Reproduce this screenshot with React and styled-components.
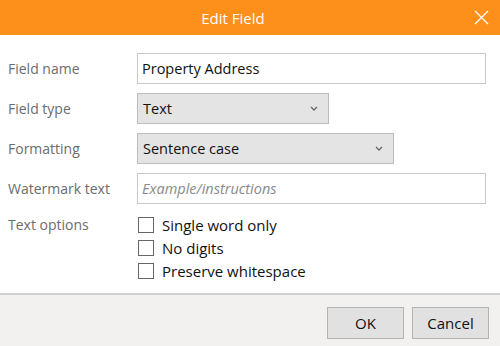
import React from 'react';
import styled, { createGlobalStyle } from 'styled-components';

const GlobalStyle = createGlobalStyle`
  html, body {
    margin: 0;
    padding: 0;
    background: #ffffff;
  }
  body {
    font-family: "Open Sans", "Noto Sans", sans-serif;
  }
`;

const App = () => {
  return (
    <Dialog>
      <GlobalStyle />
      <Header>
        <Title>Edit Field</Title>
        <CloseButton aria-label="Close">
          <svg width="15" height="15" viewBox="0 0 15 15">
            <path d="M1 1 L14 14 M14 1 L1 14" stroke="#fff" strokeWidth="1.3" fill="none" />
          </svg>
        </CloseButton>
      </Header>
      <Body>
        <Row>
          <Label>Field name</Label>
          <TextInput defaultValue="Property Address" />
        </Row>
        <Row>
          <Label>Field type</Label>
          <Select width={192}>
            Text
            <Chevron />
          </Select>
        </Row>
        <Row>
          <Label>Formatting</Label>
          <Select width={257}>
            Sentence case
            <Chevron />
          </Select>
        </Row>
        <Row>
          <Label>Watermark text</Label>
          <TextInput placeholder="Example/instructions" />
        </Row>
        <Row top>
          <Label>Text options</Label>
          <Options>
            <Option><Box />Single word only</Option>
            <Option><Box />No digits</Option>
            <Option><Box />Preserve whitespace</Option>
          </Options>
        </Row>
      </Body>
      <Footer>
        <Button>OK</Button>
        <Button>Cancel</Button>
      </Footer>
    </Dialog>
  );
};

const Chevron = () => (
  <ChevronIcon width="8" height="5" viewBox="0 0 8 5">
    <path d="M1 1 L4 4 L7 1" stroke="#666" strokeWidth="1.3" fill="none" />
  </ChevronIcon>
);

const Dialog = styled.div`
  display: flex;
  flex-direction: column;
  height: 346px;
  width: 500px;
  background: #fff;
`;

const Header = styled.div`
  display: flex;
  align-items: center;
  height: 35px;
  background: #fd8f1b;
  color: #fff;
`;

const Title = styled.div`
  flex: 1;
  text-align: center;
  font-size: 15px;
`;

const CloseButton = styled.div`
  width: 30px;
  height: 35px;
  margin-right: 4px;
  display: flex;
  align-items: center;
  justify-content: center;
`;

const Body = styled.div`
  flex: 1;
  display: flex;
  flex-direction: column;
  gap: 9px;
  padding: 18px 14px 0 8px;
`;

const Row = styled.div`
  display: flex;
  align-items: ${(p) => (p.top ? 'flex-start' : 'center')};
  min-height: 31px;
`;

const Label = styled.div`
  width: 129px;
  flex-shrink: 0;
  color: #6c6c6c;
  font-size: 14px;
  line-height: 23px;
`;

const TextInput = styled.input`
  flex: 1;
  height: 31px;
  box-sizing: border-box;
  border: 1px solid #c9c9c9;
  padding: 0 4px;
  font-family: inherit;
  font-size: 14.5px;
  color: #111;
  outline: none;

  &::placeholder {
    color: #8a8a8a;
    font-style: italic;
  }
`;

const Select = styled.div`
  width: ${(p) => p.width}px;
  height: 31px;
  box-sizing: border-box;
  border: 1px solid #bdbdbd;
  background: #e4e4e4;
  display: flex;
  align-items: center;
  justify-content: space-between;
  padding: 0 10px 0 5px;
  font-size: 14.5px;
  color: #111;
`;

const ChevronIcon = styled.svg`
  display: block;
`;

const Options = styled.div`
  display: flex;
  flex-direction: column;
`;

const Option = styled.label`
  display: flex;
  align-items: center;
  height: 23px;
  font-size: 15px;
  color: #111;
`;

const Box = styled.span`
  width: 16px;
  height: 16px;
  box-sizing: border-box;
  border: 1px solid #666;
  margin: 0 8px 0 1px;
  background: #fff;
`;

const Footer = styled.div`
  height: 53px;
  box-sizing: border-box;
  border-top: 2px solid #d2d2d2;
  background: #f2f1f0;
  display: flex;
  justify-content: flex-end;
  align-items: flex-start;
  gap: 8px;
  padding: 12px 11px 0 0;
`;

const Button = styled.button`
  width: 77px;
  height: 32px;
  border: 1px solid #b4b4b4;
  background: #e1e1e1;
  font-family: inherit;
  font-size: 15px;
  color: #111;
  padding: 0;
`;

export default App;
